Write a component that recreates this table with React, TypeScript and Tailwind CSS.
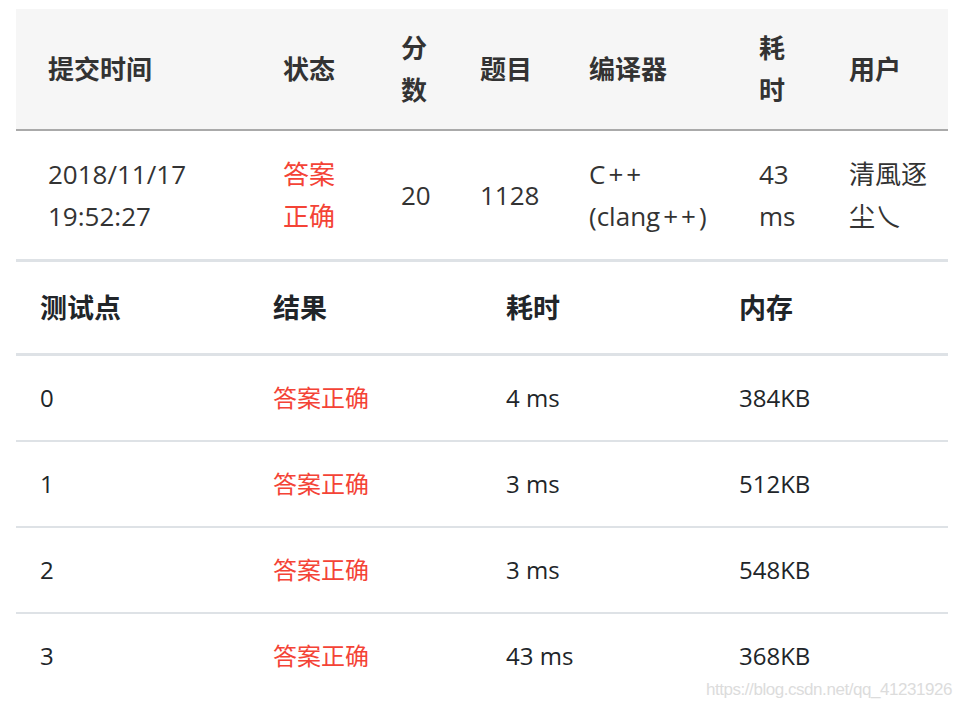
import React from "react";

const font = { fontFamily: "'Open Sans','Noto Sans CJK SC',sans-serif" };

export default function App() {
  const rows = [
    ["0", "4 ms", "384KB"],
    ["1", "3 ms", "512KB"],
    ["2", "3 ms", "548KB"],
    ["3", "43 ms", "368KB"],
  ];
  const th1 = "pl-[32px] pr-[16px] py-[18px] text-left align-middle font-bold";
  const td1 = "pl-[32px] pr-[16px] py-[22px] text-left align-middle font-normal";
  return (
    <div className="relative min-h-[708px] w-[962px] bg-white pt-[9px] pl-[16px]" style={font}>
      <table className="w-[932px] table-fixed border-collapse text-[26px] leading-[42px] text-[#333333]">
        <colgroup>
          <col className="w-[235px]" />
          <col className="w-[118px]" />
          <col className="w-[79px]" />
          <col className="w-[109px]" />
          <col className="w-[170px]" />
          <col className="w-[90px]" />
          <col className="w-[131px]" />
        </colgroup>
        <thead>
          <tr className="bg-[#f6f6f6] border-b-2 border-[#aaaaaa]">
            <th className={th1}>提交时间</th>
            <th className={th1}>状态</th>
            <th className={th1}>分<br />数</th>
            <th className={th1}>题目</th>
            <th className={th1}>编译器</th>
            <th className={th1}>耗<br />时</th>
            <th className={th1}>用户</th>
          </tr>
        </thead>
        <tbody>
          <tr>
            <td className={td1}>2018/11/17<br />19:52:27</td>
            <td className={td1 + " text-[#f44336]"}>答案<br />正确</td>
            <td className={td1}>20</td>
            <td className={td1}>1128</td>
            <td className={td1 + " whitespace-nowrap"}>
              C<span className="pl-[3px] tracking-[3px]">++</span>
              <br />
              (clang<span className="pl-[3px] tracking-[3px]">++</span>)
            </td>
            <td className={td1}>43<br />ms</td>
            <td className={td1}>清風逐<br />尘乀</td>
          </tr>
        </tbody>
      </table>
      <table className="w-[932px] table-fixed border-collapse border-t-[3px] border-[#dee2e6] text-[#212529]">
        <colgroup>
          <col className="w-[233px]" />
          <col className="w-[233px]" />
          <col className="w-[233px]" />
          <col className="w-[233px]" />
        </colgroup>
        <thead>
          <tr className="border-b-[3px] border-[#dee2e6]">
            {["测试点", "结果", "耗时", "内存"].map((h) => (
              <th key={h} className="pl-[24px] py-[25px] text-left text-[27px] leading-[41px] font-bold">
                {h}
              </th>
            ))}
          </tr>
        </thead>
        <tbody>
          {rows.map((r, i) => (
            <tr key={r[0]} className={i < rows.length - 1 ? "border-b-2 border-[#dee2e6]" : ""}>
              <td className="pl-[24px] py-[23px] text-[24px] leading-[38px]">{r[0]}</td>
              <td className="pl-[24px] py-[23px] text-[24px] leading-[38px] text-[#f44336]">答案正确</td>
              <td className="pl-[24px] py-[23px] text-[24px] leading-[38px]">{r[1]}</td>
              <td className="pl-[24px] py-[23px] text-[24px] leading-[38px]">{r[2]}</td>
            </tr>
          ))}
        </tbody>
      </table>
      <div
        className="absolute right-[10px] top-[679px] text-[17px] leading-[22px] text-[#dcdcdc] tracking-[-0.45px]"
        style={{ fontFamily: "'Liberation Sans',Arial,sans-serif" }}
      >
        https://blog.csdn.net/qq_41231926
      </div>
    </div>
  );
}
